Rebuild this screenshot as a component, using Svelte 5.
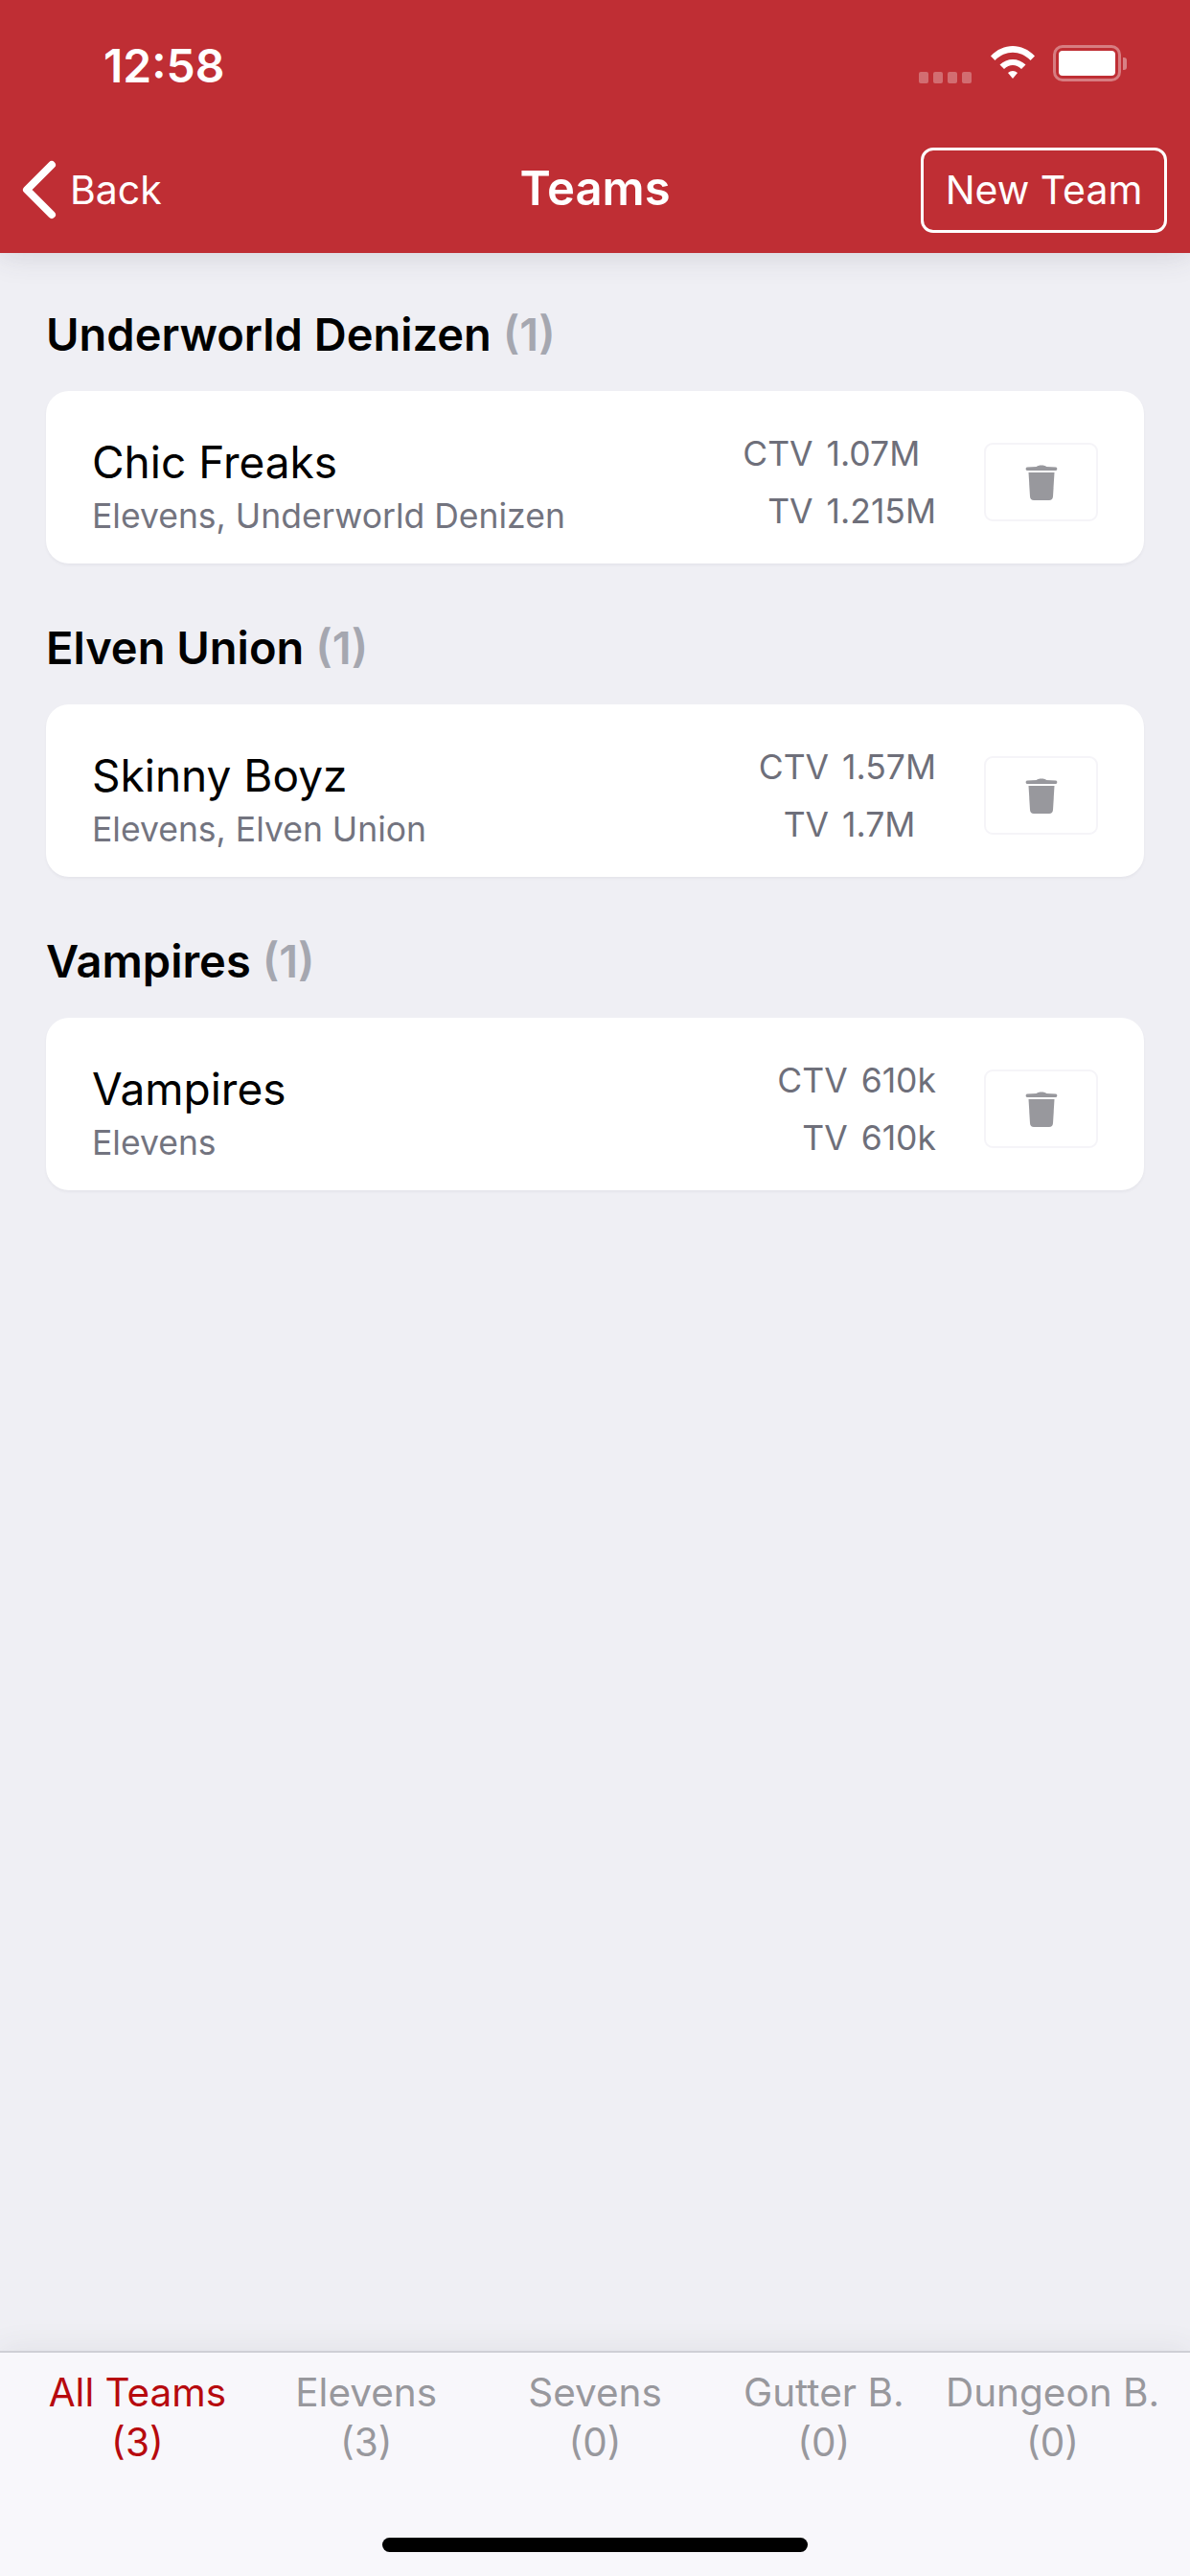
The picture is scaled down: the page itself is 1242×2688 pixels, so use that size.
<script>
    const groups = [
        { name: "Underworld Denizen", teams: [{ name: "Chic Freaks", sub: "Elevens, Underworld Denizen", ctv: "1.07M", tv: "1.215M" }] },
        { name: "Elven Union", teams: [{ name: "Skinny Boyz", sub: "Elevens, Elven Union", ctv: "1.57M", tv: "1.7M" }] },
        { name: "Vampires", teams: [{ name: "Vampires", sub: "Elevens", ctv: "610k", tv: "610k" }] },
    ];

    const tabs = [
        { label: "All Teams", count: 3 },
        { label: "Elevens", count: 3 },
        { label: "Sevens", count: 0 },
        { label: "Gutter B.", count: 0 },
        { label: "Dungeon B.", count: 0 },
    ];
    let active = $state(0);
</script>

<div class="screen">
    <header>
        <div class="status">
            <span class="time">12:58</span>
            <div class="status-icons">
                <div class="signal"><i></i><i></i><i></i><i></i></div>
                <svg class="wifi" width="48" height="38" viewBox="0 0 48 38">
                    <path d="M1 12.5C14 -1.5 34 -1.5 47 12.5L42.5 17C32 6 16 6 5.500 17Z" fill="#fff" />
                    <path d="M10.500 21.500C18 14 30 14 37.500 21.500L33 26C27.500 20.500 20.500 20.500 15 26Z" fill="#fff" />
                    <path d="M19 30C22 27.300 26 27.300 29 30L24 36Z" fill="#fff" />
                </svg>
                <div class="battery">
                    <div class="battery-body"><div class="battery-fill"></div></div>
                    <div class="battery-cap"></div>
                </div>
            </div>
        </div>
        <nav>
            <button class="back">
                <svg width="38" height="62" viewBox="0 0 38 62">
                    <path d="M32 5L6 31L32 57" fill="none" stroke="#fff" stroke-width="8" stroke-linecap="round" stroke-linejoin="round" />
                </svg>
                <span>Back</span>
            </button>
            <h1>Teams</h1>
            <button class="new-team">New Team</button>
        </nav>
    </header>

    <main>
        {#each groups as group (group.name)}
            <section>
                <h2>{group.name} <span class="count">({group.teams.length})</span></h2>
                {#each group.teams as team (team.name)}
                    <div class="card">
                        <div class="info">
                            <div class="team-name">{team.name}</div>
                            <div class="team-sub">{team.sub}</div>
                        </div>
                        <div class="stats">
                            <span class="k">CTV</span><span>{team.ctv}</span>
                            <span class="k">TV</span><span>{team.tv}</span>
                        </div>
                        <button class="trash" aria-label="Delete">
                            <svg width="34" height="38" viewBox="0 0 34 38">
                                <path d="M12 3C13 1 21 1 22 3L32 3.500C33.800 3.700 33.800 6.800 32 7L2 7C0.200 6.800 0.200 3.700 2 3.500Z" fill="#98989d" />
                                <path d="M3.500 9L30.500 9L29 34C28.800 36.500 27.500 38 25 38L9 38C6.500 38 5.200 36.500 5 34Z" fill="#98989d" />
                            </svg>
                        </button>
                    </div>
                {/each}
            </section>
        {/each}
    </main>

    <footer>
        <div class="tabs">
            {#each tabs as tab, i (tab.label)}
                <button class="tab" class:active={active === i} onclick={() => (active = i)}>
                    <span>{tab.label}</span>
                    <span>({tab.count})</span>
                </button>
            {/each}
        </div>
        <div class="home"></div>
    </footer>
</div>

<style>
    :global(body) {
        background: #efeff4;
    }

    .screen {
        width: 1242px;
        height: 2688px;
        display: flex;
        flex-direction: column;
        font-family: Inter, "Liberation Sans", sans-serif;
        background: #efeff4;
        overflow: hidden;
    }

    button {
        font-family: inherit;
        background: none;
        border: none;
        padding: 0;
        margin: 0;
    }

    header {
        height: 264px;
        flex-shrink: 0;
        background: #bf2e34;
        color: #fff;
        box-shadow: 0 2px 30px rgba(60, 60, 80, 0.16);
        position: relative;
        z-index: 1;
    }

    .status {
        height: 132px;
        display: flex;
        justify-content: space-between;
        align-items: center;
        padding: 0 66px 0 108px;
    }

    .time {
        font-size: 48px;
        font-weight: 600;
        position: relative;
        top: 2px;
    }

    .status-icons {
        display: flex;
        align-items: center;
    }

    .signal {
        display: flex;
        gap: 5px;
        margin: 30px 19px 0 0;
    }

    .signal i {
        width: 10px;
        height: 12px;
        border-radius: 2px;
        background: rgba(255, 255, 255, 0.3);
    }

    .wifi {
        margin: 0 18px 3px 0;
    }

    .battery {
        display: flex;
        align-items: center;
        gap: 2px;
    }

    .battery-body {
        width: 71px;
        height: 38px;
        box-sizing: border-box;
        border: 3px solid rgba(255, 255, 255, 0.38);
        border-radius: 10px;
        padding: 3px;
    }

    .battery-fill {
        height: 100%;
        background: #fff;
        border-radius: 4px;
    }

    .battery-cap {
        width: 4px;
        height: 13px;
        background: rgba(255, 255, 255, 0.4);
        border-radius: 0 3px 3px 0;
    }

    nav {
        height: 132px;
        position: relative;
        display: flex;
        justify-content: space-between;
        align-items: center;
        padding: 0 24px 0 22px;
    }

    .back {
        display: flex;
        align-items: center;
        gap: 13px;
        color: #fff;
        font-size: 41px;
    }

    h1 {
        position: absolute;
        left: 0;
        right: 0;
        top: 35px;
        margin: 0;
        text-align: center;
        font-size: 49px;
        line-height: 60px;
        font-weight: 600;
        pointer-events: none;
    }

    .new-team {
        width: 257px;
        height: 89px;
        box-sizing: border-box;
        border: 3px solid #fff;
        border-radius: 13px;
        color: #fff;
        font-size: 41px;
    }

    main {
        flex: 1;
        padding: 0 48px;
    }

    section {
        display: flex;
        flex-direction: column;
    }

    h2 {
        margin: 0;
        height: 144px;
        padding-bottom: 29px;
        box-sizing: border-box;
        display: flex;
        align-items: flex-end;
        gap: 12px;
        font-size: 47px;
        line-height: 60px;
        font-weight: 600;
        color: #000;
    }

    section + section h2 {
        height: 147px;
    }

    .count {
        color: #a5a7b0;
    }

    .card {
        height: 180px;
        background: #fff;
        border-radius: 24px;
        box-shadow: 0 2px 3px rgba(60, 60, 80, 0.05);
        display: flex;
        align-items: center;
        padding: 0 48px;
    }

    .info {
        flex: 1;
        padding-top: 17px;
    }

    .team-name {
        font-size: 46px;
        line-height: 60px;
        color: #000;
    }

    .team-sub {
        font-size: 35.5px;
        line-height: 46px;
        color: #73747f;
        margin-top: 4px;
    }

    .stats {
        display: grid;
        grid-template-columns: auto auto;
        column-gap: 14px;
        row-gap: 16px;
        font-size: 35.5px;
        line-height: 44px;
        color: #6e6f7a;
        margin: 12px 50px 0 0;
    }

    .k {
        text-align: right;
    }

    .trash {
        width: 119px;
        height: 82px;
        flex-shrink: 0;
        box-sizing: border-box;
        border: 2px solid #f5f4f8;
        border-radius: 9px;
        display: flex;
        align-items: center;
        justify-content: center;
        margin-top: 10px;
    }

    footer {
        height: 235px;
        flex-shrink: 0;
        background: #f8f7fb;
        border-top: 2px solid #cfcfd6;
        box-sizing: border-box;
        box-shadow: 0 -2px 30px rgba(60, 60, 80, 0.08);
        display: flex;
        flex-direction: column;
        align-items: center;
        position: relative;
    }

    .tabs {
        width: 100%;
        box-sizing: border-box;
        padding: 18px 24px 0;
        display: grid;
        grid-template-columns: repeat(5, 1fr);
    }

    .tab {
        display: flex;
        flex-direction: column;
        align-items: center;
        gap: 4px;
        font-size: 40.5px;
        line-height: 48px;
        color: #98989d;
        white-space: nowrap;
    }

    .tab.active {
        color: #b70a0e;
    }

    .home {
        position: absolute;
        left: 399px;
        bottom: 25px;
        width: 444px;
        height: 15px;
        background: #000;
        border-radius: 8px;
    }
</style>
